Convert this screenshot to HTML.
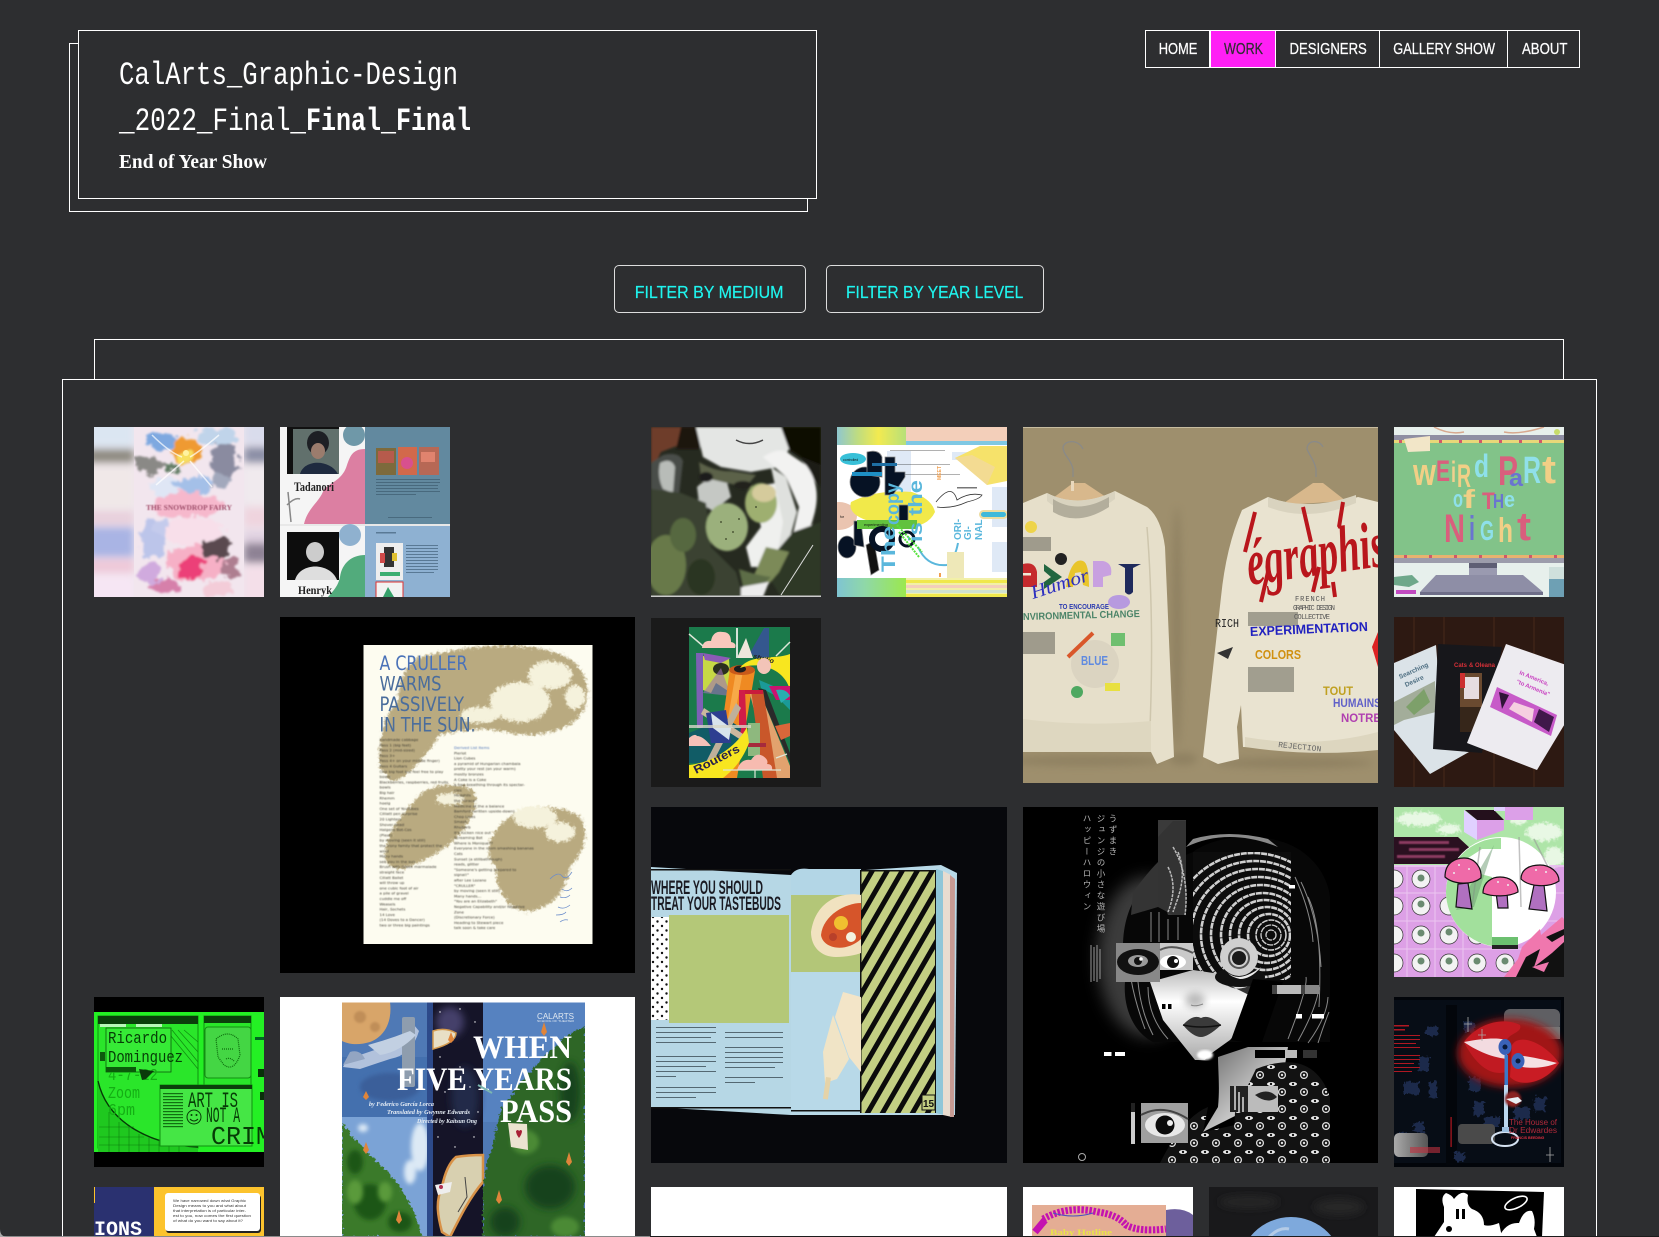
<!DOCTYPE html>
<html lang="en"><head><meta charset="utf-8"><title>CalArts_Graphic-Design_2022_Final_Final_Final</title>
<style>
html,body{margin:0;padding:0;background:#2d2e30;overflow:hidden;width:1659px;height:1237px}
body{font-family:"Liberation Sans",sans-serif}
#page{position:absolute;left:0;top:0;width:1659px;height:1237px;overflow:hidden}
.box{position:absolute;box-sizing:border-box;border:1px solid #fff}
.t{position:absolute;overflow:hidden;display:block}
.t>svg{display:block;width:100%;height:100%}
#ov{position:absolute;left:0;top:0;width:1659px;height:1237px;pointer-events:none}
.cell{position:absolute;top:30px;height:38px;box-sizing:border-box;border:1px solid #fff;margin-left:-1px}
</style></head><body><div id="page">
<svg width="0" height="0" style="position:absolute"><defs>
<filter id="b05"><feGaussianBlur stdDeviation=".5"/></filter>
<filter id="b1"><feGaussianBlur stdDeviation="1"/></filter>
<filter id="b2"><feGaussianBlur stdDeviation="2"/></filter>
<filter id="b4" x="-30%" y="-30%" width="160%" height="160%"><feGaussianBlur stdDeviation="4"/></filter>
<filter id="b8" x="-50%" y="-50%" width="200%" height="200%"><feGaussianBlur stdDeviation="8"/></filter>
<filter id="r1" x="-10%" y="-10%" width="120%" height="120%"><feTurbulence type="fractalNoise" baseFrequency=".11" numOctaves="3" seed="3" result="n"/><feDisplacementMap in="SourceGraphic" in2="n" scale="16" xChannelSelector="R" yChannelSelector="G" result="d"/><feGaussianBlur in="d" stdDeviation="1.1"/></filter>
<filter id="r2" x="-10%" y="-10%" width="120%" height="120%"><feTurbulence type="fractalNoise" baseFrequency=".3" numOctaves="2" seed="7" result="n"/><feDisplacementMap in="SourceGraphic" in2="n" scale="7" xChannelSelector="R" yChannelSelector="G"/></filter>
<pattern id="eyes" width="22" height="17" patternUnits="userSpaceOnUse"><ellipse cx="6" cy="5" rx="4" ry="2" fill="#eee"/><circle cx="6" cy="5" r="1.2" fill="#111"/><circle cx="17" cy="13" r="3.4" fill="none" stroke="#ddd" stroke-width="1.3"/><circle cx="17" cy="13" r="1.2" fill="#ddd"/></pattern>
<pattern id="stripes" width="13" height="13" patternUnits="userSpaceOnUse" patternTransform="rotate(30)"><rect width="13" height="13" fill="#c3cf83"/><rect width="5" height="13" fill="#0b0b0b"/></pattern>
<pattern id="dots" width="9" height="9" patternUnits="userSpaceOnUse"><rect width="9" height="9" fill="#fff"/><circle cx="2" cy="2" r="1.2" fill="#111"/><circle cx="6.5" cy="6.5" r="1.2" fill="#111"/></pattern>
<linearGradient id="gface" x1="0" y1="0" x2="0" y2="1"><stop offset="0" stop-color="#bbb"/><stop offset=".35" stop-color="#fff"/><stop offset="1" stop-color="#aaa"/></linearGradient>
<linearGradient id="gneck" x1="0" y1="0" x2="1" y2="1"><stop offset="0" stop-color="#666"/><stop offset=".6" stop-color="#ccc"/><stop offset="1" stop-color="#444"/></linearGradient>
<linearGradient id="gs1" x1="0" y1="0" x2="1" y2="0"><stop offset="0" stop-color="#8fc7cf"/><stop offset=".3" stop-color="#bfdc80"/><stop offset=".6" stop-color="#f2ea50"/><stop offset="1" stop-color="#b7e07a"/></linearGradient>
<linearGradient id="gs2" x1="0" y1="0" x2="1" y2="0"><stop offset="0" stop-color="#7fc4d2"/><stop offset=".4" stop-color="#8fd8a8"/><stop offset="1" stop-color="#9be84e"/></linearGradient>
<linearGradient id="gg" x1="0" y1="0" x2="1" y2="0"><stop offset="0" stop-color="#555"/><stop offset="1" stop-color="#aaa"/></linearGradient>
</defs></svg>

<header>
<div class="box" style="left:69px;top:43px;width:739px;height:169px"></div>
<div class="box" style="left:78px;top:30px;width:739px;height:169px;background:#2d2e30"></div>
</header>
<nav>
<div class="cell" style="left:1146px;width:65px"></div>
<div class="cell" style="left:1211px;width:66px;background:#ff1ff5"></div>
<div class="cell" style="left:1276px;width:105px"></div>
<div class="cell" style="left:1380px;width:129px"></div>
<div class="cell" style="left:1508px;width:73px"></div>
</nav>
<div class="box" style="left:614px;top:265px;width:192px;height:48px;border-radius:5px;border-color:#ddd"></div>
<div class="box" style="left:826px;top:265px;width:218px;height:48px;border-radius:5px;border-color:#ddd"></div>
<div class="box" style="left:94px;top:339px;width:1470px;height:40px;border-bottom:0"></div>
<div class="box" style="left:62px;top:379px;width:1535px;height:858px;background:#2d2e30;border-bottom:0"></div>

<!-- 1 snowdrop -->
<div class="t" style="left:94px;top:427px;width:170px;height:170px"><svg viewBox="0 0 170 170">
<rect width="170" height="170" fill="#efe6ee"/>
<g filter="url(#b4)"><rect x="-6" y="-6" width="46" height="26" fill="#dbe6f2"/><rect x="-6" y="22" width="46" height="14" fill="#8d8a80"/><rect x="-6" y="38" width="46" height="44" fill="#f0e8e8"/><rect x="-6" y="84" width="46" height="14" fill="#e8d0dc"/><rect x="-6" y="100" width="46" height="30" fill="#a9b4e4"/><rect x="-6" y="132" width="46" height="14" fill="#eec8d8"/><rect x="-6" y="148" width="46" height="30" fill="#f6e6f4"/>
<rect x="150" y="-6" width="26" height="24" fill="#d9dcec"/><rect x="150" y="20" width="26" height="16" fill="#8b8fa6"/><rect x="150" y="38" width="26" height="40" fill="#f0eaee"/><rect x="150" y="80" width="26" height="20" fill="#efd4de"/><rect x="150" y="104" width="26" height="12" fill="#dfd0e0"/><rect x="150" y="116" width="26" height="20" fill="#8e8294"/><rect x="150" y="138" width="26" height="40" fill="#f4dfe9"/></g>
<rect x="40" y="0" width="110" height="170" fill="#f2e6ee"/>
<svg x="40" y="0" width="110" height="170" viewBox="40 0 110 170"><g filter="url(#r1)">
<ellipse cx="66" cy="12" rx="16" ry="10" fill="#7ea8e0"/><ellipse cx="122" cy="10" rx="20" ry="8" fill="#c0d4ea"/>
<ellipse cx="92" cy="24" rx="14" ry="14" fill="#ef9a30"/><ellipse cx="92" cy="30" rx="8" ry="7" fill="#f7e060"/>
<ellipse cx="56" cy="38" rx="15" ry="8" fill="#8a8986"/><ellipse cx="130" cy="32" rx="14" ry="17" fill="#8a8ba0"/><ellipse cx="78" cy="42" rx="9" ry="4" fill="#5f7a62"/>
<ellipse cx="72" cy="60" rx="16" ry="10" fill="#dfe6f5"/><ellipse cx="100" cy="58" rx="20" ry="8" fill="#a4c0e8"/><ellipse cx="128" cy="54" rx="9" ry="8" fill="#a2a8bc"/>
<ellipse cx="92" cy="78" rx="36" ry="13" fill="#f6b8cc"/><ellipse cx="58" cy="112" rx="12" ry="20" fill="#bcc5ea"/><ellipse cx="70" cy="100" rx="10" ry="8" fill="#c4cbec"/>
<ellipse cx="100" cy="105" rx="30" ry="14" fill="#f8dfea"/><ellipse cx="102" cy="136" rx="30" ry="18" fill="#f6b0c6"/><ellipse cx="98" cy="140" rx="12" ry="12" fill="#ec3f78"/>
<ellipse cx="122" cy="122" rx="15" ry="11" fill="#5a4a50"/><ellipse cx="136" cy="142" rx="10" ry="8" fill="#ae7e90"/><ellipse cx="56" cy="146" rx="12" ry="10" fill="#d0aade"/><ellipse cx="72" cy="160" rx="16" ry="8" fill="#d680aa"/><ellipse cx="125" cy="162" rx="16" ry="8" fill="#f3ccd8"/></g>
<path d="M58 8 Q75 25 88 30M125 8Q105 25 96 30M62 58L90 34M118 60L96 34" stroke="#fff" stroke-width="1.5" fill="none" opacity=".7"/>
<circle cx="92" cy="26" r="3" fill="#fff3a0"/></svg>
<text x="52" y="83" font-size="7" font-weight="700" fill="#a0506c" textLength="86" lengthAdjust="spacingAndGlyphs" filter="url(#b05)" font-family="Liberation Serif">THE SNOWDROP FAIRY</text>
</svg></div>

<!-- 2 tadanori -->
<div class="t" style="left:280px;top:427px;width:170px;height:170px"><svg viewBox="0 0 170 170" font-family="Liberation Serif,serif">
<rect width="85" height="170" fill="#f5f5f5"/><rect x="85" width="85" height="97" fill="#62899f"/><rect x="85" y="99" width="85" height="71" fill="#8eb1d2"/><rect y="97" width="170" height="2" fill="#e8e8e8"/>
<circle cx="74" cy="8" r="11" fill="#6f98a8"/>
<path d="M85 22C72 22 70 30 67 38C63 52 52 55 44 62C40 75 28 80 24 97L85 97Z" fill="#dc7fa2"/>
<rect x="7" y="0" width="52" height="47" fill="#111"/><rect x="13" y="2" width="46" height="45" fill="#61706c"/><ellipse cx="38" cy="16" rx="11" ry="12" fill="#1d1f24"/><ellipse cx="38" cy="24" rx="7" ry="8" fill="#9b7c6d"/><path d="M20 47C24 32 50 32 58 47Z" fill="#1e2a3f"/>
<text x="14" y="64" font-size="12.5" font-weight="700" fill="#222" textLength="40" lengthAdjust="spacingAndGlyphs">Tadanori</text>
<path d="M8 65L11 95M7 78Q15 70 20 72" stroke="#888" stroke-width="1.5" fill="none"/>
<rect x="96" y="21" width="20" height="27" fill="#7d6a3c"/><rect x="98" y="24" width="16" height="12" fill="#b65b4c"/><rect x="118" y="20" width="19" height="28" fill="#d2694b"/><circle cx="127" cy="36" r="6" fill="#d8508e"/><rect x="139" y="20" width="20" height="28" fill="#b76855"/><rect x="141" y="25" width="14" height="10" fill="#e0836e"/>
<g fill="#3e5c70" opacity=".7"><rect x="96" y="52" width="64" height="1"/><rect x="96" y="55" width="64" height="1"/><rect x="96" y="58" width="62" height="1"/><rect x="96" y="61" width="62" height="1"/><rect x="96" y="64" width="64" height="1"/><rect x="96" y="67" width="40" height="1"/><rect x="108" y="90" width="44" height="1"/></g>
<circle cx="70" cy="108" r="11" fill="#8fb1cf"/><path d="M85 128C72 128 62 136 60 150C58 160 52 165 48 170L85 170Z" fill="#52ab7c"/>
<rect x="7" y="105" width="52" height="48" fill="#0d0d0d"/><ellipse cx="35" cy="125" rx="9" ry="10" fill="#ccc"/><path d="M15 153C20 135 50 135 57 153Z" fill="#dedede"/>
<text x="18" y="167" font-size="12" font-weight="700" fill="#222" textLength="34" lengthAdjust="spacingAndGlyphs">Henryk</text>
<rect x="96" y="116" width="27" height="37" fill="#eee"/><rect x="104" y="120" width="10" height="20" fill="#333"/><rect x="100" y="126" width="5" height="10" fill="#d04a4a"/><rect x="112" y="126" width="5" height="8" fill="#e0c030"/><rect x="100" y="145" width="20" height="4" fill="#3cae70"/>
<rect x="96" y="155" width="27" height="20" fill="#f2f2f2" stroke="#d33" stroke-width="1"/><path d="M103 170L108 160L114 170Z" fill="#36a06a"/>
<g fill="#44627c" opacity=".7"><rect x="126" y="118" width="32" height="1"/><rect x="126" y="121" width="32" height="1"/><rect x="126" y="124" width="32" height="1"/><rect x="126" y="127" width="32" height="1"/><rect x="126" y="130" width="32" height="1"/><rect x="126" y="133" width="32" height="1"/><rect x="126" y="136" width="32" height="1"/><rect x="126" y="139" width="32" height="1"/><rect x="126" y="142" width="32" height="1"/><rect x="126" y="145" width="28" height="1"/><rect x="96" y="105" width="20" height="1.5"/></g>
</svg></div>

<!-- 3 cruller -->
<div class="t" style="left:280px;top:617px;width:355px;height:356px"><svg viewBox="0 0 355 356" font-family="DejaVu Sans,sans-serif">
<rect width="355" height="356" fill="#000"/><rect x="83.5" y="28" width="229" height="299" fill="#fdfcf0"/>
<svg x="83.5" y="28" width="229" height="299" viewBox="83.5 28 229 299"><g filter="url(#r2)"><g filter="url(#b1)" fill="#b9aa80">
<path d="M140 40C175 32 225 22 270 34C305 42 312 70 305 90C295 115 255 122 225 115C205 110 180 113 160 118C148 135 130 160 112 165L100 150C98 130 102 100 118 85C118 65 125 48 140 40Z"/>
<path d="M138 180C150 165 185 165 195 175C200 195 180 225 150 240C130 250 110 260 105 240C105 215 125 195 138 180Z"/>
<path d="M215 215C225 195 270 180 300 200C312 220 300 240 290 250C285 275 275 290 245 295C225 290 215 270 216 250C205 240 208 225 215 215Z"/>
</g>
<g filter="url(#b1)" fill="#f5f2dc"><ellipse cx="270" cy="58" rx="22" ry="14"/><ellipse cx="240" cy="85" rx="30" ry="20"/><ellipse cx="200" cy="98" rx="20" ry="8"/><ellipse cx="295" cy="80" rx="10" ry="12"/><ellipse cx="255" cy="200" rx="22" ry="11"/><ellipse cx="280" cy="215" rx="15" ry="10"/><ellipse cx="170" cy="182" rx="14" ry="6"/></g></g></svg>
<g font-size="19.5" fill="#4a72b8"><text x="99.5" y="53" textLength="88" lengthAdjust="spacingAndGlyphs">A CRULLER</text><text x="99.5" y="73.5" textLength="62" lengthAdjust="spacingAndGlyphs" fill="#4a6d9c">WARMS</text><text x="99.5" y="94" textLength="84.5" lengthAdjust="spacingAndGlyphs" fill="#4a6d9c">PASSIVELY</text><text x="99.5" y="114.5" textLength="96" lengthAdjust="spacingAndGlyphs" fill="#4a6d9c">IN THE SUN.</text></g>
<g font-size="3.9" fill="#3d3a30" filter="url(#b05)">
<text x="99.5" y="124">handmade cabbage</text><text x="99.5" y="129.3">Pass 1 (big feet)</text><text x="99.5" y="134.6">Pass 2 (mid-sized)</text><text x="99.5" y="139.9">Pass 3+</text><text x="99.5" y="145.2">Pass 4+ on your middle finger)</text><text x="99.5" y="150.5">Pass 4 Guitars</text><text x="99.5" y="155.8">One big foot but feel free to play</text><text x="99.5" y="161.1">bowls</text><text x="99.5" y="166.4">Blackberries, raspberries, red fruits</text><text x="99.5" y="171.7">bowls</text><text x="99.5" y="177">Big hair</text><text x="99.5" y="182.3">Rhemm</text><text x="99.5" y="187.6">hoelg</text><text x="99.5" y="192.9">One set of YouTubes</text><text x="99.5" y="198.2">Cilliatt pen surprise</text><text x="99.5" y="203.5">20 Lighters</text><text x="99.5" y="208.8">Shover head</text><text x="99.5" y="214.1">Halgens Bot-Cos</text><text x="99.5" y="219.4">(Pleat)</text><text x="99.5" y="224.7">by moving (seen it still)</text><text x="99.5" y="230">the Irony family that protect the</text><text x="99.5" y="235.3">wind</text><text x="99.5" y="240.6">Many hands</text><text x="99.5" y="245.9">see you in the sun</text><text x="99.5" y="251.2">Brush with Greek marmalade</text><text x="99.5" y="256.5">straight face</text><text x="99.5" y="261.8">Cillatt Ballet</text><text x="99.5" y="267.1">will throw up</text><text x="99.5" y="272.4">one cubic foot of air</text><text x="99.5" y="277.7">a pile of gravel</text><text x="99.5" y="283">cuddle me off</text><text x="99.5" y="288.3">Weasels</text><text x="99.5" y="293.6">Hair, Sochets</text><text x="99.5" y="298.9">14 Love</text><text x="99.5" y="304.2">(14 Doves to a Dancer)</text><text x="99.5" y="309.5">two or three big paintings</text>
<text x="174" y="132" fill="#4a72b8">Derived List Items</text><text x="174" y="137.3">Pierlot</text><text x="174" y="142.6">Lion Cubes</text><text x="174" y="147.9">a pyramid of Hungarian chambala</text><text x="174" y="153.2">pretty your rest (on your warm)</text><text x="174" y="158.5">mostly bronzes</text><text x="174" y="163.8">A Coke is a Coke</text><text x="174" y="169.1">a tree breathing through its spectar-</text><text x="174" y="174.4">cles</text><text x="174" y="179.7">Hedghils</text><text x="174" y="185">the "Grace"</text><text x="174" y="190.3">Medicine at the a balance</text><text x="174" y="195.6">Bamford (written upside-down)</text><text x="174" y="200.9">Chop Lines</text><text x="174" y="206.2">Smash</text><text x="174" y="211.5">Rhubarb</text><text x="174" y="216.8">It's fucken nice out</text><text x="174" y="222.1">Screaming Bot</text><text x="174" y="227.4">Where is Monique??</text><text x="174" y="232.7">Everyone in the room smashing bananas</text><text x="174" y="238">Cats</text><text x="174" y="243.3">Sunset (a stillbathrough)</text><text x="174" y="248.6">reads, glitter</text><text x="174" y="253.9">"Someone's getting prepared to</text><text x="174" y="259.2">signal!"</text><text x="174" y="264.5">after Lee Lozano</text><text x="174" y="269.8">"CRULLER"</text><text x="174" y="275.1">by moving (seen it still)</text><text x="174" y="280.4">Many hands...</text><text x="174" y="285.7">"You are an Elizabeth"</text><text x="174" y="291">Negative Capability and/or Negative</text><text x="174" y="296.3">Zone</text><text x="174" y="301.6">(Discretionary Force)</text><text x="174" y="306.9">Heading to Stewart piece</text><text x="174" y="312.2">talk soon &amp; take care</text></g>
<g stroke="#6a8ccb" stroke-width=".7" fill="none"><path d="M270 262q8-8 12-3t10-4M282 272q5 4 10-1M280 280q6 2 10-2M278 290q6 3 12-2M276 298q8 0 10-3M280 305q4-3 8-2"/></g>
</svg></div>

<!-- 4 face -->
<div class="t" style="left:651px;top:427px;width:170px;height:170px"><svg viewBox="0 0 170 170">
<rect width="170" height="170" fill="#262a20"/>
<g filter="url(#b1)">
<path d="M0 0H40L28 18L10 25L0 45Z" fill="#6e3e2a"/><path d="M30 0H60L48 22L25 22Z" fill="#1a1310"/><path d="M128 0H170V38L150 30L135 20Z" fill="#0c0705"/><path d="M150 30L170 38V60L160 50Z" fill="#1b1a16"/>
<path d="M0 36L12 28Q28 24 32 34L28 68L12 70L0 62Z" fill="#4a4d48"/><path d="M9 36Q20 30 24 40L22 66L12 62Q6 50 9 36Z" fill="#b8bcb8"/>
<path d="M45 0H130L138 22L128 40L100 45L70 40L52 30Z" fill="#e4e6e4"/><path d="M46 60Q58 48 76 55L80 70L62 84L48 76Z" fill="#c5c8c4"/>
<path d="M48 35Q65 45 80 44L105 48L95 60L76 56L50 50Z" fill="#5c6248"/><ellipse cx="92" cy="58" rx="9" ry="4" fill="#20201b"/><ellipse cx="55" cy="50" rx="7" ry="5" fill="#1e1e1a"/>
<path d="M100 60L125 56L140 80L132 120L125 140L100 140L95 120L110 100Z" fill="#eff0ee"/>
<path d="M112 30Q130 18 140 28L155 38Q172 60 162 92L152 125L140 165L132 165L138 125L148 80L135 50Z" fill="#f2f2f1"/>
<path d="M120 40L135 50L146 85L135 125L125 135L132 95Z" fill="#dfe1de"/>
<path d="M0 62L30 66L55 76L60 120L85 145L92 170H0Z" fill="#3b4231"/>
<ellipse cx="76" cy="100" rx="21" ry="24" fill="#9bb07c"/><ellipse cx="110" cy="76" rx="16" ry="20" fill="#9eaf70"/><ellipse cx="113" cy="66" rx="12" ry="9" fill="#d5cb9c"/>
<ellipse cx="15" cy="138" rx="20" ry="30" fill="#68794a"/><ellipse cx="32" cy="108" rx="13" ry="17" fill="#56683f"/><ellipse cx="50" cy="150" rx="14" ry="18" fill="#2a3522"/>
<path d="M112 140L142 105L170 95V170H130Z" fill="#2e3826"/><path d="M115 120L138 125L128 145L115 160L100 155Z" fill="#7c8a58"/><path d="M88 142Q105 148 120 150L105 165L92 160Z" fill="#5d6d46"/><path d="M90 160L118 155L112 170H90Z" fill="#ececec"/>
</g>
<path d="M85 13Q98 20 112 13" stroke="#444" stroke-width="1.5" fill="none"/><path d="M130 168L162 118" stroke="#ddd" stroke-width="1" fill="none"/><g fill="#4e5a38"><circle cx="70" cy="95" r="1"/><circle cx="82" cy="105" r="1"/><circle cx="75" cy="112" r="1"/><circle cx="88" cy="92" r="1"/><circle cx="105" cy="80" r="1"/></g>
<rect y="168.5" width="170" height="1.5" fill="#ccc"/></svg></div>

<!-- 5 original -->
<div class="t" style="left:837px;top:427px;width:170px;height:170px"><svg viewBox="0 0 170 170" font-family="Liberation Sans,sans-serif">
<rect width="170" height="170" fill="#fff"/>
<rect width="69" height="18" fill="url(#gs1)"/><rect x="69" width="101" height="14" fill="#f3cfba"/><rect x="69" y="14" width="101" height="4" fill="#7fc8e4"/>
<rect y="151" width="69" height="19" fill="url(#gs2)"/><rect x="69" y="151" width="101" height="19" fill="#f2f0a8"/><rect x="69" y="153" width="101" height="3" fill="#f0e84c"/><rect x="69" y="158" width="101" height="3" fill="#f3cfba"/><rect x="69" y="163" width="101" height="3" fill="#cfe1d0"/><rect x="69" y="167" width="101" height="3" fill="#f0e84c"/>
<g fill="#dfe9f6"><rect x="50" y="24" width="24" height="50"/><rect x="155" y="60" width="15" height="40"/><rect x="155" y="115" width="15" height="30"/><rect x="115" y="25" width="30" height="8"/></g>
<path d="M118 31L143 19H170V54L150 58Z" fill="#f6e26a"/><path d="M118 31L150 58L158 40L135 28Z" fill="#f2d9a4" opacity=".7"/>
<g fill="#222" opacity=".35"><rect x="53" y="23" width="55" height="1"/><rect x="53" y="37" width="60" height="1"/><rect x="53" y="47" width="70" height="1"/></g>
<text x="101" y="50" font-size="5" fill="#f0a050" transform="rotate(-90 104 50)" font-weight="700">MEET</text>
<ellipse cx="16" cy="32" rx="13" ry="6" fill="#38c0d8"/><text x="6" y="34" font-size="3.5" fill="#111">controlled</text>
<ellipse cx="2" cy="89" rx="18" ry="14" fill="#eac4b0"/><text x="3" y="91" font-size="3.5" fill="#111">for</text>
<path d="M14 75Q40 62 75 65Q95 72 98 85Q90 102 62 100L35 95Q10 88 14 75Z" fill="#f1e94a"/>
<g fill="#061224" stroke="#8a8a8a" stroke-width=".8"><ellipse cx="28" cy="55" rx="15" ry="15"/><path d="M30 25Q42 22 45 30L45 50L30 48Z"/><path d="M48 30H58V45H68V50L56 68H48Z"/><rect x="62" y="78" width="9" height="20"/><ellipse cx="10" cy="120" rx="9" ry="11"/><path d="M17 94L24 94L27 120L17 118Z"/><path d="M29 118L37 114L42 143L34 148Z" fill="#111"/></g>
<rect x="15" y="45" width="30" height="4" fill="#1e8fc4"/><rect x="35" y="36" width="25" height="3" fill="#1e6fa4"/>
<rect x="20" y="93" width="60" height="9" fill="#62c23e"/><text x="27" y="99" font-size="3.8" fill="#111">experimenting</text>
<circle cx="45" cy="112" r="10" fill="none" stroke="#061224" stroke-width="6"/><circle cx="70" cy="112" r="7" fill="none" stroke="#061224" stroke-width="3"/>
<g font-weight="700" fill="#5ab7dc" font-size="19"><text transform="translate(58 145) rotate(-90)" textLength="46" lengthAdjust="spacingAndGlyphs">The</text><text transform="translate(62 98) rotate(-90)" textLength="42" lengthAdjust="spacingAndGlyphs">copy</text><text transform="translate(85 115) rotate(-90)" textLength="62" lengthAdjust="spacingAndGlyphs">is the</text></g>
<g font-weight="700" fill="#5ab7dc" font-size="10"><text transform="translate(124 113) rotate(-90)">ORI-</text><text transform="translate(134 113) rotate(-90)">GI-</text><text transform="translate(145 113) rotate(-90)">NAL</text></g>
<path d="M81 120Q90 140 110 138Q118 132 121 116" fill="none" stroke="#5ab7dc" stroke-width="2"/><path d="M60 98L85 125M62 105L82 130" stroke="#55e23c" stroke-width="2" stroke-dasharray="2 1"/>
<path d="M99 75Q115 55 120 73Q132 65 145 68Q143 72 130 75Q115 82 100 80" fill="none" stroke="#333" stroke-width=".8"/><rect x="120" y="60" width="20" height="1.5" fill="#777"/>
<rect x="143" y="84" width="27" height="7" rx="3.5" fill="#3fb9da" stroke="#eddca0" stroke-width="2"/>
<g fill="#eee8b8"><rect x="110" y="125" width="17" height="26"/></g><rect x="102" y="146" width="2" height="4" fill="#f0a050"/>
</svg></div>

<!-- 6 routers -->
<div class="t" style="left:651px;top:618px;width:170px;height:169px"><svg viewBox="0 0 170 169" font-family="Liberation Sans,sans-serif">
<rect width="170" height="169" fill="#1a1a1a"/><rect x="38" y="9" width="101" height="151" fill="#1b7a4b"/>
<path d="M51 30Q52 22 60 23Q62 12 72 14Q80 14 80 24Q86 25 84 30Z" fill="#f9c8bd"/>
<path d="M99 35L113 10L118 10L118 50Z" fill="#34578e"/><path d="M95 20L102 40L86 40Z" fill="#efe6dc"/><path d="M85 10H87V40H85Z" fill="#d6e2d8"/><path d="M38 16L52 28M139 24L125 38" stroke="#dfe6d8" stroke-width="1.5"/>
<path d="M45 35L52 35L52 110L46 110Z" fill="#7d60b5"/><path d="M52 38L78 40L80 75L65 65L60 75L52 72Z" fill="#c7d845"/><path d="M52 35L80 40L70 45L54 42Z" fill="#8b5bb6"/><ellipse cx="70" cy="51" rx="8" ry="6" fill="#2b2f1e"/><path d="M52 75L70 50L80 78Z" fill="#9c6fb8" opacity=".6"/>
<path d="M79 50L104 53L86 160L64 160Z" fill="#ef8a22"/><path d="M85 53L92 53L72 160L67 160Z" fill="#f7a948"/><ellipse cx="91" cy="52" rx="13" ry="5" fill="#c95a1a"/><ellipse cx="89" cy="51" rx="6" ry="3.5" fill="#1e1e1e"/>
<path d="M89 50C100 35 125 42 139 36L139 72C133 50 108 43 89 50Z" fill="#f8e61f"/><text transform="translate(102 40) rotate(15)" font-size="7" font-weight="700" font-style="italic" fill="#222">studio</text>
<ellipse cx="113" cy="48" rx="7" ry="8" fill="#f3c4b8"/>
<path d="M108 62L139 75L139 92L125 78L110 70Z" fill="#1a9a98"/><path d="M118 68H139V82L125 82Z" fill="#cb1470"/><path d="M125 72Q135 70 139 78L130 85Z" fill="#2aaeb0"/>
<path d="M98 72L108 72L139 148L139 160L120 160Z" fill="#e2a26e"/><path d="M107 70L139 145L139 135L115 72Z" fill="#2a2a2a"/><path d="M100 72H112L126 160H112Z" fill="#c9572a"/><path d="M124 108L139 105V118L130 122Z" fill="#d9673a"/>
<path d="M88 72H112V76H88Z" fill="#c91b3c"/><path d="M88 72H94L96 120H88Z" fill="#d01c48"/><rect x="97" y="105" width="12" height="33" fill="#8eb87e"/><rect x="97" y="125" width="18" height="4" fill="#a62a3c"/>
<path d="M38 115L75 100L90 110L85 145H38Z" fill="#115c66"/><path d="M53 90L95 118L90 122L50 96Z" fill="#cbb89e"/><path d="M85 85L52 150L58 152L90 90Z" fill="#bfb09a"/><path d="M55 95L75 92L80 125L60 125Z" fill="#2d3e90"/><path d="M60 95L80 110L78 122L62 110Z" fill="#d8e4ec"/>
<path d="M38 120Q44 115 46 118Q52 118 60 128H38Z" fill="#f5c1b8"/><path d="M38 107H100V110H38Z" fill="#d8d8c8" opacity=".8"/>
<path d="M38 147C60 145 85 130 96 109L98 125C92 140 85 150 72 160H38Z" fill="#f8e61f"/><text transform="translate(45 156) rotate(-27)" font-size="11.5" font-weight="700" fill="#27214a" textLength="50" lengthAdjust="spacingAndGlyphs">Routers</text>
<path d="M86 152Q90 140 100 142Q105 134 112 138Q118 142 116 146Q122 146 121 152Z" fill="#f7bbb0"/><path d="M104 152V160M72 152H130M125 140L136 136" stroke="#dfe6d8" stroke-width="1.2"/>
</svg></div>

<!-- 7 sweatshirts -->
<div class="t" style="left:1023px;top:427px;width:355px;height:356px"><svg viewBox="0 0 355 356" font-family="Liberation Sans,sans-serif">
<rect width="355" height="356" fill="#9e8f6d"/><rect width="355" height="1" fill="#c7bc9f"/>
<g opacity=".45" fill="#7d6f52" filter="url(#b4)"><ellipse cx="160" cy="332" rx="14" ry="6"/><ellipse cx="60" cy="334" rx="80" ry="5"/><ellipse cx="270" cy="336" rx="80" ry="5"/><ellipse cx="154" cy="200" rx="5" ry="120"/></g>
<g fill="none" stroke="#8a8a88" stroke-width="1.3"><path d="M50 50V42C48 32 40 28 40 20C42 13 55 12 60 22"/><path d="M293 50V42C291 32 286 28 284 22C284 13 296 12 300 20"/></g>
<path d="M18 80L50 56L62 56L92 76Z" fill="#d8b88c"/><path d="M258 78L290 56L300 56L323 74Z" fill="#d8b88c"/><rect x="48" y="54" width="3" height="10" fill="#e9d8bc"/>
<path d="M0 76L24 66Q55 82 92 64L124 80Q138 90 142 120L151 330L134 337L128 325L0 325Z" fill="#e6dfca"/><path d="M24 66Q55 82 92 64L92 72Q55 100 24 74Z" fill="#d9d3bf"/><path d="M30 72Q55 88 86 70L86 80Q55 100 30 85Z" fill="#b3ae9c"/>
<path d="M124 100Q132 200 126 325" stroke="#cec6ad" stroke-width="1.5" fill="none"/><path d="M0 292Q60 300 128 294V325H0Z" fill="#ded7c0"/>
<path d="M355 323L355 75L335 70Q285 85 245 70L219 83Q203 120 198 170L180 330L195 337L216 332L214 300L218 278L220 320Z" fill="#e9e3d0"/><path d="M245 70Q285 85 333 68L333 76Q285 96 245 80Z" fill="#d9d3bf"/><path d="M222 310Q290 322 355 305V323Q290 330 222 320Z" fill="#ddd6bf"/>
<g font-weight="700">
<path d="M0 137Q12 134 14 145V160H0Z" fill="#c52a2c"/><rect x="0" y="146" width="8" height="2.5" fill="#f1ead6"/><path d="M21 137L39 150L21 162V155L28 150L21 144Z" fill="#226640"/><path d="M43 160Q48 130 60 134Q66 136 66 160L60 158L58 145L52 146L50 160Z" fill="#e9c52a"/><path d="M70 134H80Q90 136 88 148L80 150L80 160L70 160Z" fill="#c8a0e0"/><path d="M95 137H118L110 141L110 165Q106 170 102 165L102 141Z" fill="#1f2a5c"/><circle cx="38" cy="132" r="6" fill="#222"/><ellipse cx="96" cy="175" rx="11" ry="7" fill="#b79adf"/>
<text x="36" y="182" font-size="7.5" fill="#2b3ab0" textLength="50" lengthAdjust="spacingAndGlyphs">TO ENCOURAGE</text>
<text x="0" y="193" font-size="10" fill="#4b8468" textLength="117" lengthAdjust="spacingAndGlyphs" transform="rotate(-1.5 0 193)">NVIRONMENTAL CHANGE</text>
<text x="10" y="172" font-size="19" fill="#2d2fc0" font-family="Liberation Serif" font-style="italic" font-weight="400" transform="rotate(-18 10 172)" textLength="60" lengthAdjust="spacingAndGlyphs">Humor</text>
</g>
<circle cx="72" cy="237" r="24" fill="#d6cfbe" opacity=".7"/><text x="58" y="238" font-size="13" font-weight="700" fill="#5f8ae0" textLength="27" lengthAdjust="spacingAndGlyphs">BLUE</text>
<path d="M45 230L70 206" stroke="#d9572a" stroke-width="4"/><rect x="88" y="206" width="14" height="13" fill="#6fbf6f"/><circle cx="54" cy="265" r="6" fill="#4ea860"/><rect x="82" y="256" width="15" height="8" fill="#e8e040"/>
<g fill="#4a4a40"><rect x="0" y="110" width="28" height="14" opacity=".45"/><rect x="0" y="205" width="32" height="22" opacity=".45"/><rect x="225" y="185" width="50" height="14" opacity=".45"/><rect x="225" y="240" width="46" height="25" opacity=".45"/></g>
<circle cx="8" cy="100" r="6" fill="#eed44a"/>
<text x="224" y="158" font-size="66" fill="#b9161c" font-family="Liberation Serif" font-style="italic" font-weight="700" textLength="140" lengthAdjust="spacingAndGlyphs" transform="rotate(-8 224 140)">égraphis</text>
<g stroke="#b9161c" stroke-width="4" fill="none"><path d="M232 85L222 125M280 80L288 115M320 75L316 100M245 145L238 175M296 140L290 165M310 155L312 170"/></g>
<g fill="#555" font-family="Liberation Mono" font-size="7"><text x="272" y="174" textLength="30">FRENCH</text><text x="270" y="183" textLength="42">GRAPHIC DESIGN</text><text x="271" y="192" textLength="36">COLLECTIVE</text></g>
<text x="227" y="209" font-size="13" font-weight="700" fill="#2020bf" textLength="118" lengthAdjust="spacingAndGlyphs" transform="rotate(-2.5 227 206)">EXPERIMENTATION</text>
<text x="192" y="200" font-size="12" fill="#222" font-family="Liberation Mono" textLength="24" lengthAdjust="spacingAndGlyphs">RICH</text><path d="M194 226L210 220L205 232Z" fill="#333"/>
<g font-size="13" font-weight="700"><text x="232" y="232" fill="#d09010" textLength="46" lengthAdjust="spacingAndGlyphs">COLORS</text></g>
<g font-size="12" font-weight="700"><text x="300" y="268" fill="#c0a020" textLength="30" lengthAdjust="spacingAndGlyphs">TOUT</text><text x="310" y="280" fill="#6060c8" textLength="48" lengthAdjust="spacingAndGlyphs">HUMAINS</text><text x="318" y="295" fill="#b040b0" textLength="40" lengthAdjust="spacingAndGlyphs">NOTRE</text></g>
<text x="255" y="320" font-size="8" fill="#666" font-family="Liberation Mono" transform="rotate(6 255 320)">REJECTION</text><path d="M349 220L355 205V240Z" fill="#d22"/>
</svg></div>

<!-- 8 weird part -->
<div class="t" style="left:1394px;top:427px;width:170px;height:170px"><svg viewBox="0 0 170 170" font-family="Liberation Sans,sans-serif">
<rect width="170" height="170" fill="#e7f0ec"/><rect y="8" width="170" height="7" fill="#8f8fa3"/><rect y="15" width="170" height="113" fill="#82c389"/>
<rect y="13" width="170" height="3" fill="#e8d879"/><rect y="128" width="170" height="3" fill="#e8b26f"/><rect y="131" width="170" height="5" fill="#9c9cab"/>
<g fill="#d0576a"><rect x="5" y="13" width="3" height="3"/><rect x="25" y="13" width="3" height="3"/><rect x="45" y="13" width="3" height="3"/><rect x="65" y="13" width="3" height="3"/><rect x="85" y="13" width="3" height="3"/><rect x="105" y="13" width="3" height="3"/><rect x="125" y="13" width="3" height="3"/><rect x="145" y="13" width="3" height="3"/><rect x="10" y="128" width="3" height="3"/><rect x="35" y="128" width="3" height="3"/><rect x="60" y="128" width="3" height="3"/><rect x="85" y="128" width="3" height="3"/><rect x="110" y="128" width="3" height="3"/><rect x="135" y="128" width="3" height="3"/><rect x="160" y="128" width="3" height="3"/></g>
<path d="M10 12L36 9L36 24L14 25Z" fill="#f2e6c8"/><path d="M40 0Q55 8 70 5M110 5Q125 8 150 0" stroke="#d7a88e" stroke-width="1.5" fill="none"/><circle cx="163" cy="5" r="3" fill="#c7dc6a"/>
<g font-weight="700"><text x="19" y="58" font-size="38" fill="#f2cf86" textLength="23" lengthAdjust="spacingAndGlyphs">w</text><text x="42" y="54" font-size="30" fill="#d95f7d" textLength="14" lengthAdjust="spacingAndGlyphs">E</text><text x="57" y="55" font-size="30" fill="#f0d08e" textLength="5" lengthAdjust="spacingAndGlyphs">i</text><text x="63" y="60" font-size="32" fill="#f2cf86" textLength="14" lengthAdjust="spacingAndGlyphs">R</text><text x="80" y="50" font-size="32" fill="#8ee0ea" textLength="15" lengthAdjust="spacingAndGlyphs">d</text>
<text x="104" y="58" font-size="42" fill="#d95f7d" textLength="20" lengthAdjust="spacingAndGlyphs">P</text><text x="115" y="59" font-size="24" fill="#6a74d0" textLength="14" lengthAdjust="spacingAndGlyphs">a</text><text x="129" y="56" font-size="38" fill="#90e0ea" textLength="18" lengthAdjust="spacingAndGlyphs">R</text><text x="148" y="56" font-size="40" fill="#f2cf86" textLength="14" lengthAdjust="spacingAndGlyphs">t</text>
<text x="59" y="80" fill="#8ee0ea" font-size="24" textLength="10" lengthAdjust="spacingAndGlyphs">o</text><text x="69" y="81" fill="#f2cf86" font-size="26" textLength="12" lengthAdjust="spacingAndGlyphs">f</text><text x="88" y="82" fill="#d95f7d" font-size="24" textLength="13" lengthAdjust="spacingAndGlyphs">T</text><text x="99" y="81" fill="#6a74d0" font-size="20" textLength="11" lengthAdjust="spacingAndGlyphs">H</text><text x="110" y="80" fill="#8ee0ea" font-size="22" textLength="11" lengthAdjust="spacingAndGlyphs">e</text>
<text x="50" y="115" fill="#d95f7d" font-size="40" textLength="21" lengthAdjust="spacingAndGlyphs">N</text><text x="75" y="113" fill="#6a74d0" font-size="34" textLength="6" lengthAdjust="spacingAndGlyphs">i</text><text x="86" y="113" fill="#8ee0ea" font-size="28" textLength="14" lengthAdjust="spacingAndGlyphs">G</text><text x="104" y="115" fill="#f2cf86" font-size="34" textLength="15" lengthAdjust="spacingAndGlyphs">h</text><text x="123" y="113" fill="#d95f7d" font-size="40" textLength="14" lengthAdjust="spacingAndGlyphs">t</text></g>
<rect x="75" y="136" width="28" height="5" fill="#5e5e74"/><rect x="75" y="141" width="28" height="14" fill="#9a9ab0"/><path d="M42 148L129 148L149 165V168H26V165Z" fill="#8e8ea6"/><rect x="26" y="165" width="123" height="3" fill="#6e6e88"/>
<rect x="155" y="140" width="15" height="30" fill="#cfe0dc"/><rect x="155" y="152" width="15" height="18" fill="#6ea0b4"/><path d="M0 150L18 148L25 155L15 160L0 158Z" fill="#6ea88a"/><rect x="2" y="163" width="20" height="4" fill="#c14bc0"/>
</svg></div>

<!-- 9 books -->
<div class="t" style="left:1394px;top:617px;width:170px;height:170px"><svg viewBox="0 0 170 170" font-family="Liberation Sans,sans-serif">
<rect width="170" height="170" fill="#2d1912"/><g stroke="#3a2116" stroke-width="2"><path d="M50 0V170M100 0V170M140 0V170M20 0V170"/></g>
<path d="M0 46L42 28L50 132L75 135L36 157L0 113Z" fill="#dbe3e8"/>
<path d="M0 85L41 64L42 95L10 103L0 108Z" fill="#a3ad9a"/><path d="M12 90L30 72L36 85L20 98Z" fill="#7da06a"/>
<text transform="translate(6 62) rotate(-24)" font-size="6.5" font-weight="700" fill="#4c6d80">Searching</text><text transform="translate(12 70) rotate(-24)" font-size="6.5" font-weight="700" fill="#4c6d80">Desire</text>
<path d="M44 27L108 30L88 136L39 132Z" fill="#17171b"/>
<text x="60" y="50" font-size="6" font-weight="700" fill="#d83038">Cats</text><text x="75" y="50" font-size="6" font-weight="700" fill="#d83038">&amp; Oleana</text>
<rect x="66" y="56" width="22" height="59" fill="#6a4a30"/><rect x="70" y="60" width="15" height="22" fill="#e6dde0"/><rect x="66" y="90" width="22" height="25" fill="#36261a"/><rect x="66" y="56" width="5" height="15" fill="#cc3030"/>
<path d="M112 27L172 48L175 100L143 153L73 126Z" fill="#edebf0"/>
<path d="M103 70L163 98L157 119L96 90Z" fill="#c75ac8"/><path d="M120 85L140 92L138 105L115 92Z" fill="#f5cfe0"/><path d="M105 75L115 78L108 92Z" fill="#301438"/><path d="M145 92L160 100L155 115L140 105Z" fill="#40184a"/>
<text transform="translate(125 57) rotate(22)" font-size="5.8" font-weight="700" fill="#c83ec0">In America,</text><text transform="translate(122 66) rotate(22)" font-size="5.8" font-weight="700" fill="#c83ec0">"to Armenia"</text>
</svg></div>

<!-- 10 book spread -->
<div class="t" style="left:651px;top:807px;width:356px;height:356px"><svg viewBox="0 0 356 356" font-family="Liberation Sans,sans-serif">
<rect width="356" height="356" fill="#07080c"/>
<path d="M0 60L140 68L140 308L0 300Z" fill="#b6d7e5"/><path d="M140 68L290 58L306 66L304 308L140 308Z" fill="#b8d9e8"/>
<path d="M140 68Q145 60 158 62L210 62L210 88L140 88Z" fill="#b3d6e6"/>
<rect x="140" y="88" width="70" height="77" fill="#b3c678"/>
<rect x="18" y="108" width="120" height="108" fill="#b4c878"/><rect y="110" width="18" height="103" fill="url(#dots)"/>
<rect y="62" width="140" height="1.5" fill="#111"/><rect y="300" width="140" height="1.5" fill="#111"/><rect x="140" y="303" width="70" height="1.5" fill="#111"/>
<text x="0" y="87" font-size="19" font-weight="700" fill="#1a1a22" textLength="112" lengthAdjust="spacingAndGlyphs">WHERE YOU SHOULD</text><text x="0" y="103" font-size="19" font-weight="700" fill="#1a1a22" textLength="130" lengthAdjust="spacingAndGlyphs">TREAT YOUR TASTEBUDS</text>
<rect x="210" y="63" width="75" height="243" fill="url(#stripes)"/><rect x="209" y="63" width="1.5" height="243" fill="#111"/><rect x="284" y="63" width="1.5" height="243" fill="#111"/><rect x="210" y="63" width="75" height="1.5" fill="#111"/>
<rect x="271" y="288" width="13" height="15" fill="#c3cf83" stroke="#111"/><text x="272" y="300" font-size="10" font-weight="700" fill="#111">15</text>
<path d="M285 62L292 64L294 308L285 306Z" fill="#8fc6d8"/><path d="M292 64L300 68L301 310L292 308Z" fill="#e8dcd0"/><path d="M299 68L304 72L303 310L299 310Z" fill="#c79b94"/>
<path d="M210 88C195 85 165 90 160 125C160 140 170 150 185 150C195 150 205 148 210 146Z" fill="#f1e2c0"/><path d="M210 96C195 96 172 108 170 128C172 142 195 146 210 132Z" fill="#d6552a"/><circle cx="190" cy="116" r="7" fill="#f0c030"/><circle cx="200" cy="130" r="5" fill="#f3f3e0"/><circle cx="182" cy="130" r="4" fill="#b8402a"/>
<path d="M192 185L210 190V265L198 250L184 210Z" fill="#f3e5c8"/><path d="M172 245L182 208L198 252L186 272L174 276Z" fill="#f0e4c6"/><rect x="175" y="270" width="5" height="22" fill="#e5d3a8" transform="rotate(8 175 270)"/>
<g fill="#2c3a42" opacity=".7"><rect x="5" y="220" width="60" height="1"/><rect x="5" y="225" width="60" height="1"/><rect x="5" y="230" width="55" height="1"/><rect x="5" y="235" width="60" height="1"/><rect x="5" y="249" width="60" height="1"/><rect x="5" y="254" width="60" height="1"/><rect x="5" y="259" width="50" height="1"/><rect x="5" y="264" width="60" height="1"/><rect x="5" y="269" width="20" height="1"/><rect x="5" y="280" width="60" height="1"/><rect x="5" y="285" width="60" height="1"/><rect x="5" y="290" width="40" height="1"/>
<rect x="74" y="225" width="58" height="1"/><rect x="74" y="230" width="58" height="1"/><rect x="74" y="240" width="58" height="1"/><rect x="74" y="245" width="58" height="1"/><rect x="74" y="250" width="58" height="1"/><rect x="74" y="255" width="58" height="1"/><rect x="74" y="260" width="50" height="1"/><rect x="74" y="270" width="58" height="1"/><rect x="74" y="275" width="30" height="1"/></g>
</svg></div>

<!-- 11 girl -->
<div class="t" style="left:1023px;top:807px;width:355px;height:356px"><svg viewBox="0 0 355 356">
<rect width="355" height="356" fill="#000"/>
<ellipse cx="125" cy="150" rx="50" ry="80" fill="#777" filter="url(#b8)" opacity=".5"/>
<path d="M100 140C100 90 130 60 170 45C190 30 230 25 260 35C290 45 305 70 307 90L307 235H210L130 235C110 225 100 200 102 175Z" fill="#070707"/>
<path d="M135 13H163V108H145L135 80Z" fill="#3a3a3a"/><path d="M135 30L150 14L163 14V108L150 108L135 100Z" fill="#333"/>
<g stroke="#bbb" stroke-width="1.5" fill="none" stroke-dasharray="3 1"><path d="M150 40C162 60 165 85 162 108M155 45C165 70 155 90 150 105M145 60Q155 80 145 105"/></g>
<path d="M110 85Q125 65 135 55V100L108 108Z" fill="#343434"/>
<svg x="170" y="45" width="98" height="128" viewBox="170 45 98 128"><rect x="170" y="45" width="98" height="128" fill="#0c0c0c"/>
<g fill="none" stroke="#cfcfcf" stroke-width="2.6" stroke-dasharray="6 .8"><circle cx="248" cy="128" r="5" stroke-width="1.3"/><circle cx="248" cy="128" r="10" stroke-width="1.3"/><circle cx="248" cy="128" r="15" stroke-width="1.6"/><circle cx="246" cy="128" r="21"/><circle cx="244" cy="128" r="28"/><circle cx="242" cy="128" r="35"/><circle cx="240" cy="128" r="42"/><circle cx="238" cy="128" r="50"/><circle cx="236" cy="128" r="58"/><circle cx="234" cy="128" r="66"/><circle cx="232" cy="128" r="74"/><circle cx="230" cy="128" r="82"/></g></svg>
<path d="M163 40Q205 20 255 40L245 32Q205 22 170 32Z" fill="#8a8a8a"/>
<g stroke="#aaa" stroke-width="1" fill="none" opacity=".8"><path d="M278 75Q295 110 298 160M285 90Q300 120 296 200M272 70Q288 105 290 135M265 232Q285 180 283 170M275 234Q294 200 296 180M285 236Q304 210 305 190M295 236Q300 220 306 205"/><path d="M125 180Q125 210 145 232M115 175Q118 205 130 228M108 172Q112 195 122 222"/><path d="M128 105V135M136 105V135M145 112V133M155 110V133"/></g>
<path d="M127 175L170 163L238 173C232 200 218 222 207 233L186 248L182 253H172L140 213Z" fill="url(#gface)"/>
<path d="M200 175C215 190 232 175 238 173L230 190Z" fill="#333"/>
<ellipse cx="217" cy="170" rx="25" ry="10" fill="#111"/><path d="M205 166Q217 176 238 160Q228 172 217 172Q208 170 205 166Z" fill="#eee"/>
<circle cx="216" cy="150" r="19" fill="#cfcfcf"/><circle cx="216" cy="151" r="7" fill="#1a1a1a"/><circle cx="216" cy="151" r="10" fill="none" stroke="#555" stroke-width="2"/>
<rect x="93" y="136" width="44" height="39" fill="#888"/><ellipse cx="115" cy="155" rx="21" ry="13" fill="#111"/><ellipse cx="115" cy="154" rx="10" ry="6" fill="#999"/><circle cx="115" cy="154" r="4" fill="#111"/><circle cx="118" cy="152" r="1.8" fill="#fff"/>
<rect x="137" y="136" width="33" height="27" fill="#c9c9c9"/><ellipse cx="150" cy="155" rx="13" ry="7" fill="#fff"/><circle cx="150" cy="155" r="6" fill="#111"/><circle cx="153" cy="154" r="2" fill="#fff"/><path d="M137 143Q150 136 170 146" stroke="#555" stroke-width="2" fill="none"/>
<ellipse cx="172" cy="193" rx="10" ry="8" fill="#bbb" filter="url(#b4)"/><path d="M168 198Q172 200 180 197" stroke="#888" fill="none"/>
<path d="M160 218Q170 207 178 211Q186 207 198 218Q185 230 178 230Q170 230 160 218Z" fill="#3a3a3a"/><path d="M160 218Q178 222 198 218" stroke="#111" stroke-width="1.5" fill="none"/>
<ellipse cx="182" cy="248" rx="8" ry="5" fill="#fff" filter="url(#b1)"/>
<path d="M208 233L230 172L260 175L238 238Z" fill="#000"/>
<path d="M195 250C195 262 197 280 195 300L180 325L230 300L262 258L265 240L225 240Z" fill="url(#gneck)"/>
<path d="M233 262Q290 240 307 290V356H210L212 305Z" fill="#121212"/><path d="M233 262Q290 240 307 290V356H210L212 305Z" fill="url(#eyes)"/>
<path d="M137 356Q160 310 185 300L180 325L212 318L210 356Z" fill="#121212"/><path d="M137 356Q160 310 185 300L180 325L212 318L210 356Z" fill="url(#eyes)"/>
<rect x="225" y="279" width="30" height="26" fill="#bbb"/><path d="M232 288Q245 280 254 290Q245 298 232 288Z" fill="#222"/><rect x="207" y="279" width="18" height="26" fill="#222"/><g stroke="#ddd" stroke-width="1.5"><path d="M212 279V303M216 285V305M220 290V305"/></g>
<rect x="118" y="296" width="47" height="40" fill="#a0a0a0"/><ellipse cx="142" cy="318" rx="20" ry="12" fill="#e8e8e8"/><circle cx="142" cy="318" r="9.5" fill="#0c0c0c"/><circle cx="147" cy="316" r="3" fill="#eee"/><path d="M118 308Q140 296 165 312" stroke="#444" stroke-width="2" fill="none"/><rect x="108" y="305" width="4" height="32" fill="#ccc"/><rect x="108" y="296" width="4" height="9" fill="#222"/>
<g fill="#fff"><rect x="266" y="78" width="6" height="3.5"/><rect x="81" y="245" width="7.5" height="4"/><rect x="92" y="245" width="10" height="4"/><rect x="273" y="207" width="6" height="4.5"/><rect x="289" y="207" width="12" height="4.5"/><rect x="136" y="195" width="14" height="7"/></g><rect x="139" y="197" width="3.5" height="5" fill="#000"/><rect x="145" y="197" width="3.5" height="5" fill="#000"/>
<rect x="249" y="178" width="47" height="9" fill="#444"/><rect x="254" y="178" width="24" height="9" fill="#bbb"/><rect x="282" y="178" width="14" height="9" fill="#888"/>
<rect x="232" y="243" width="30" height="8" fill="#000"/><rect x="262" y="243" width="12" height="8" fill="#bbb"/><rect x="280" y="243" width="14" height="8" fill="#333"/>
<g stroke="#999" stroke-width="1"><path d="M68 138V175M71 140V174M74 138V175M77 142V172"/></g>
<g font-family="Noto Sans CJK JP,sans-serif" font-size="8.5" fill="#b5b5b5" style="writing-mode:vertical-rl;letter-spacing:2.5px"><text x="90" y="7">うずまき</text><text x="78" y="7">ジュンジの小さな遊び場</text><text x="64" y="7">ハッピーハロウィン</text></g>
<circle cx="59" cy="350" r="3.5" fill="none" stroke="#aaa"/>
</svg></div>

<!-- 12 mushrooms -->
<div class="t" style="left:1394px;top:807px;width:170px;height:170px"><svg viewBox="0 0 170 170">
<rect width="170" height="170" fill="#dda0e6"/><rect width="170" height="58" fill="#aee5a8"/>
<g filter="url(#r2)"><g fill="#e8f8e4" filter="url(#b1)"><ellipse cx="25" cy="12" rx="22" ry="7"/><ellipse cx="150" cy="25" rx="18" ry="9"/><ellipse cx="125" cy="12" rx="8" ry="6"/><ellipse cx="55" cy="22" rx="12" ry="5"/><ellipse cx="160" cy="50" rx="10" ry="10"/></g></g>
<rect y="58" width="170" height="2" fill="#e8c0ee"/>
<g stroke="#ecc6f0" stroke-width="1"><path d="M13 58V170M41 58V170M69 58V170M0 86H170M0 114H170M0 142H170"/></g>
<g fill="#f3f3f3" stroke="#333" stroke-width=".7"><circle cx="0" cy="72" r="9"/><circle cx="27" cy="72" r="9"/><circle cx="0" cy="99" r="9"/><circle cx="27" cy="99" r="9"/><circle cx="55" cy="99" r="9"/><circle cx="0" cy="128" r="9"/><circle cx="27" cy="128" r="9"/><circle cx="55" cy="128" r="9"/><circle cx="0" cy="156" r="9"/><circle cx="27" cy="156" r="9"/><circle cx="55" cy="156" r="9"/><circle cx="83" cy="156" r="9"/><circle cx="111" cy="156" r="9"/><circle cx="83" cy="128" r="9"/></g>
<g fill="#6a8a70"><circle cx="27" cy="71" r="3.5"/><circle cx="27" cy="97" r="3.5"/><circle cx="55" cy="125" r="3.5"/><circle cx="27" cy="126" r="3.5"/><circle cx="27" cy="154" r="3.5"/><circle cx="55" cy="154" r="3.5"/><circle cx="83" cy="154" r="3.5"/><circle cx="111" cy="154" r="3.5"/></g>
<path d="M0 30H64L78 43L60 57H0Z" fill="#2a1020"/><g fill="#8a3a60" filter="url(#b05)"><rect x="5" y="34" width="50" height="3"/><rect x="15" y="41" width="50" height="3"/><rect x="3" y="48" width="48" height="3"/></g>
<circle cx="107" cy="85" r="55" fill="#fff"/>
<path d="M107 31A55 55 0 0 0 52 85A55 55 0 0 0 98 139V70L60 60L88 42H107Z" fill="#a2e09c"/><rect x="98" y="130" width="26" height="8" fill="#6cc070"/><rect x="98" y="138" width="26" height="4" fill="#222"/>
<path d="M86 40L78 100M125 30L127 100M140 32L158 68" stroke="#999" stroke-width="1.5" fill="none" opacity=".6"/><path d="M100 38L80 100L62 103Z" fill="#6a9a70" opacity=".5"/>
<path d="M71 3L100 3L110 13L83 13Z" fill="#24101c"/><path d="M70 3L83 13V33L70 25Z" fill="#e0d0ff"/><path d="M83 13H110V23L83 33Z" fill="#dca0e8"/><rect x="111" y="0" width="28" height="13" fill="#dca0e8"/><rect x="100" y="0" width="11" height="4" fill="#e0d0ff"/>
<g stroke="#111" stroke-width="1.2"><path d="M64 77L62 100L78 102L74 76Z" fill="#b070c0"/><path d="M102 85L104 101L114 101L113 85Z" fill="#b070c0"/><path d="M140 78L135 102L153 104L150 78Z" fill="#b070c0"/>
<path d="M51 70C51 55 62 51 70 51C82 51 88 62 87 71C78 78 60 78 51 70Z" fill="#ef6aa8"/><path d="M89 86C89 75 98 70 106 70C115 70 124 75 124 85C115 90 98 90 89 86Z" fill="#ef6aa8"/><path d="M127 72C127 62 136 58 146 58C156 58 165 65 165 74C155 81 135 80 127 72Z" fill="#ef6aa8"/></g>
<g fill="#eee"><circle cx="65" cy="58" r="1"/><circle cx="75" cy="62" r="1"/><circle cx="60" cy="66" r="1"/><circle cx="104" cy="75" r="1"/><circle cx="114" cy="78" r="1"/><circle cx="142" cy="63" r="1"/><circle cx="152" cy="65" r="1"/></g>
<path d="M110 170L124 152L128 140L146 122L147 128L168 110L170 112V170Z" fill="#f077ae"/><g fill="#111"><path d="M122 170L132 150L146 142L140 160L158 146L170 135V170Z"/><path d="M138 160L155 155L150 165Z" fill="#f077ae"/><path d="M152 130L170 122V128L158 135Z"/></g>
</svg></div>

<!-- 13 lips -->
<div class="t" style="left:1394px;top:997px;width:170px;height:170px"><svg viewBox="0 0 170 170" font-family="Liberation Sans,sans-serif">
<rect width="170" height="170" fill="#02050a"/><rect x="0" y="3" width="167" height="163" fill="#070d16"/><rect x="52" y="8" width="11" height="160" fill="#03060b"/>
<g fill="#1a2c4c" filter="url(#r2)"><rect x="32" y="30" width="12" height="8"/><rect x="25" y="60" width="10" height="14"/><rect x="10" y="85" width="15" height="12"/><rect x="35" y="85" width="8" height="16"/><rect x="20" y="125" width="10" height="10"/><rect x="5" y="135" width="8" height="10"/><rect x="75" y="80" width="12" height="14"/><rect x="90" y="120" width="16" height="10"/><rect x="80" y="105" width="10" height="14"/><rect x="140" y="100" width="12" height="14"/><rect x="120" y="110" width="16" height="12"/><rect x="70" y="25" width="10" height="10"/><rect x="60" y="155" width="10" height="9"/></g>
<rect x="110" y="12" width="56" height="22" rx="6" fill="#5f5f63"/><rect x="140" y="30" width="26" height="12" fill="#777"/>
<rect x="0" y="136" width="34" height="24" rx="5" fill="url(#gg)" transform="scale(-1 1) translate(-34 0)"/><rect x="64" y="127" width="37" height="20" rx="4" fill="#4a4a4a"/>
<ellipse cx="116" cy="56" rx="52" ry="34" fill="#a01818" filter="url(#b4)"/>
<path d="M70 45C85 25 110 20 126 28C129 36 114 36 112 45L112 75C95 80 80 65 70 45Z" fill="#c11a22"/><path d="M118 48C125 36 150 45 165 66C150 88 125 90 116 80Z" fill="#c91c24"/>
<path d="M70 45C90 41 108 40 113 44L113 62C95 60 80 52 70 45Z" fill="#f3dbe0"/><path d="M122 58C140 60 155 64 163 66C150 72 130 72 122 68Z" fill="#f5e0e2"/>
<ellipse cx="111" cy="50" rx="6.5" ry="8" fill="#3a62b8"/><ellipse cx="124" cy="64" rx="6.5" ry="8" fill="#3a62b8"/><circle cx="111" cy="50" r="2.5" fill="#0a1a3a"/><circle cx="124" cy="64" r="2.5" fill="#0a1a3a"/>
<rect x="110.5" y="58" width="3.5" height="30" fill="#3a78c8"/><rect x="110" y="88" width="4" height="44" fill="#bcd8ef"/>
<circle cx="119" cy="102" r="8" fill="#8a2020" filter="url(#b1)"/><path d="M112 102L124 100L128 104L122 107Z" fill="#e8eef4"/>
<ellipse cx="111" cy="142" rx="13" ry="7" fill="none" stroke="#d5e2f2" stroke-width="2"/><rect x="108" y="130" width="7" height="5" fill="#9cc0e0"/>
<g font-size="8" fill="#b02a3a"><text x="115" y="128" textLength="48" lengthAdjust="spacingAndGlyphs">The House of</text><text x="115" y="136" textLength="48" lengthAdjust="spacingAndGlyphs">Dr Edwardes</text></g><text x="117" y="142" font-size="3.6" font-weight="700" fill="#e03040">FRANCIS BEEDING</text>
<g fill="#b01822"><rect x="0" y="28" width="15" height="1.5"/><rect x="0" y="32" width="11" height="1.5"/><rect x="0" y="38" width="26" height="1"/><rect x="0" y="42" width="26" height="1"/><rect x="0" y="46" width="22" height="1"/><rect x="0" y="50" width="26" height="1"/><rect x="0" y="58" width="26" height="1"/><rect x="0" y="62" width="26" height="1"/><rect x="0" y="66" width="20" height="1"/><rect x="0" y="70" width="26" height="1"/><rect x="0" y="74" width="18" height="1"/><rect x="56.5" y="120" width="1.2" height="30"/></g><rect x="16" y="150" width="30" height="6" fill="#c03040" opacity=".6"/>
<path d="M74 20L74 35M70 27H78M88 32L88 44M84 38H92M156 150V165M152 158H160" stroke="#aaa" stroke-width=".8"/>
</svg></div>

<!-- 14 green -->
<div class="t" style="left:94px;top:997px;width:170px;height:170px"><svg viewBox="0 0 170 170" font-family="Liberation Mono,monospace">
<rect width="170" height="170" fill="#000"/><rect y="15" width="170" height="140" fill="#24f024"/>
<rect x="4" y="19" width="100" height="132" fill="#2ae62a" stroke="#109010"/><rect x="4" y="19" width="100" height="8" fill="#0b3f0b"/><rect x="6" y="27" width="26" height="3" fill="#b8f8b8"/><rect x="42" y="27" width="26" height="3" fill="#b8f8b8"/>
<path d="M4 84C14 128 60 148 104 150V155H4Z" fill="#1fc81f"/><path d="M4 84C14 128 60 148 104 150" fill="none" stroke="#063806" stroke-width="1.4"/>
<g stroke="#0e7e0e" stroke-width=".6"><path d="M15 115L15 155M25 125L25 155M35 130L35 155M45 137L45 155M55 140L55 155M65 143L65 155M75 145L75 155M85 147L85 155M5 130H40M5 140H50M5 148H95"/></g>
<g stroke="#0f8a0f" stroke-width=".7"><path d="M78 33L104 65M84 33L104 55M90 33L104 45M72 33L104 72"/></g>
<rect x="12" y="31" width="65" height="44" fill="#36ea36" stroke="#0a5a0a" stroke-width=".8"/>
<text x="14" y="46" font-size="17" fill="#063c06" textLength="59" lengthAdjust="spacingAndGlyphs">Ricardo</text><text x="14" y="65" font-size="17" fill="#063c06" textLength="75" lengthAdjust="spacingAndGlyphs">Dominguez</text>
<g fill="#14ae14" font-size="17"><text x="14" y="83" textLength="50" lengthAdjust="spacingAndGlyphs">4-7-22</text><text x="14" y="101" textLength="32" lengthAdjust="spacingAndGlyphs">Zoom</text><text x="14" y="118" textLength="27" lengthAdjust="spacingAndGlyphs">6pm</text></g>
<path d="M45 72L48 83L52 82L60 74Z" fill="#0a3a0a"/><rect x="12" y="70" width="30" height="5" fill="#0a5a0a"/><rect x="6" y="55" width="5" height="9" fill="#0d5a0d"/>
<rect x="110" y="19" width="47" height="80" fill="#2ae62a" stroke="#109010"/><rect x="110" y="19" width="47" height="7" fill="#0b3f0b"/><rect x="111" y="30" width="46" height="51" rx="3" fill="#44d644" stroke="#129012"/>
<g fill="none" stroke="#0c6a0c" stroke-width="1.2" stroke-dasharray="1 1"><path d="M122 42Q134 32 144 42L146 58Q140 75 130 68L124 60Z"/><path d="M128 52H140M132 62Q136 60 140 64"/></g>
<rect x="161" y="40" width="9" height="3" fill="#062"/><rect x="164" y="72" width="6" height="8" fill="#083008"/><rect x="166" y="95" width="4" height="8" fill="#083008"/>
<rect x="66" y="88" width="92" height="61" fill="#45e645" stroke="#109010"/><rect x="66" y="88" width="92" height="4" fill="#0b3f0b"/>
<g fill="#117011"><rect x="69" y="96" width="20" height="1.2"/><rect x="69" y="99" width="20" height="1.2"/><rect x="69" y="102" width="20" height="1.2"/><rect x="69" y="105" width="20" height="1.2"/><rect x="69" y="108" width="20" height="1.2"/><rect x="69" y="111" width="20" height="1.2"/><rect x="69" y="114" width="20" height="1.2"/><rect x="69" y="117" width="20" height="1.2"/><rect x="69" y="120" width="20" height="1.2"/><rect x="69" y="123" width="20" height="1.2"/><rect x="69" y="126" width="20" height="1.2"/><rect x="69" y="129" width="20" height="1.2"/></g>
<g fill="#063c06" font-size="22"><text x="94" y="110" textLength="50" lengthAdjust="spacingAndGlyphs">ART IS</text><text x="112" y="125" textLength="34" lengthAdjust="spacingAndGlyphs">NOT A</text><text x="117" y="147" font-size="26" textLength="75" lengthAdjust="spacingAndGlyphs">CRIME</text></g>
<circle cx="100" cy="120" r="7" fill="none" stroke="#063c06"/><circle cx="97.5" cy="118" r="1" fill="#063c06"/><circle cx="102.5" cy="118" r="1" fill="#063c06"/><path d="M96 122Q100 126 104 122" fill="none" stroke="#063c06"/>
</svg></div>

<!-- 15 five years -->
<div class="t" style="left:280px;top:997px;width:355px;height:240px"><svg viewBox="0 0 355 240" font-family="Liberation Serif,serif">
<rect width="355" height="240" fill="#fff"/>
<svg x="62" y="5.5" width="243" height="235" viewBox="62 5.5 243 235">
<rect x="62" y="5" width="243" height="236" fill="#4f79b5"/><rect x="62" y="60" width="85" height="60" fill="#4470ae"/><rect x="62" y="120" width="85" height="120" fill="#7ba3d6"/><rect x="203" y="5" width="102" height="120" fill="#5682c0"/>
<g filter="url(#b2)" fill="#dce9f5"><ellipse cx="140" cy="150" rx="9" ry="24"/><ellipse cx="83" cy="131" rx="5" ry="4"/><ellipse cx="130" cy="175" rx="6" ry="12"/></g>
<ellipse cx="110" cy="90" rx="30" ry="14" fill="#3a5e9a" filter="url(#b2)"/>
<path d="M62 5H110C112 20 108 38 90 45C80 48 70 48 62 44Z" fill="#d8a569"/><g fill="#c08e58" filter="url(#b1)"><circle cx="80" cy="20" r="6"/><circle cx="95" cy="30" r="5"/></g>
<rect x="147" y="5" width="6" height="235" fill="#2d4a8a"/><rect x="153" y="5" width="50" height="235" fill="#151428"/>
<ellipse cx="170" cy="25" rx="14" ry="15" fill="#45406a" filter="url(#b4)"/><ellipse cx="185" cy="100" rx="14" ry="30" fill="#242a4a" filter="url(#b4)"/>
<g fill="#fff"><circle cx="160" cy="15" r=".7"/><circle cx="180" cy="12" r=".7"/><circle cx="195" cy="25" r=".7"/><circle cx="160" cy="60" r=".7"/><circle cx="180" cy="70" r=".7"/><circle cx="165" cy="95" r=".7"/><circle cx="190" cy="90" r=".7"/><circle cx="198" cy="115" r=".7"/><circle cx="158" cy="140" r=".7"/><circle cx="175" cy="150" r=".7"/><circle cx="194" cy="140" r=".7"/></g>
<path d="M153 34Q165 30 176 36Q176 46 153 52Z" fill="#e8dfc6" stroke="#d49a4e" stroke-width="1.5"/>
<path d="M176 160C188 158 196 158 203 158V185C190 200 180 220 170 240L162 235C158 220 155 205 162 190C165 175 170 165 176 160Z" fill="#d8d0b0" stroke="#d89248" stroke-width="2.5"/>
<path d="M185 180L187 200L178 215" stroke="#444" fill="none"/><path d="M155 188L172 185L170 195L158 198Z" fill="#eee"/><circle cx="161" cy="190" r="2" fill="#b03050"/>
<g filter="url(#r2)"><path d="M62 125C75 145 90 158 105 172C122 190 137 215 142 240H62Z" fill="#3a7a2a"/><path d="M305 30C285 35 265 60 245 80L222 112C215 125 218 140 207 165L203 190L203 240H305Z" fill="#2d6626"/></g>
<g fill="#1f5618" filter="url(#b2)"><ellipse cx="90" cy="205" rx="16" ry="18"/><ellipse cx="120" cy="225" rx="12" ry="10"/><ellipse cx="75" cy="165" rx="8" ry="12"/></g><g fill="#5a9a3a" filter="url(#b2)"><ellipse cx="75" cy="195" rx="8" ry="12"/><ellipse cx="105" cy="195" rx="7" ry="10"/></g>
<g fill="#17431a" filter="url(#b4)"><ellipse cx="270" cy="190" rx="25" ry="22"/><ellipse cx="225" cy="225" rx="15" ry="15"/><ellipse cx="290" cy="95" rx="10" ry="30"/></g><g fill="#4b8a36" filter="url(#b2)"><ellipse cx="245" cy="145" rx="14" ry="12"/><ellipse cx="285" cy="230" rx="14" ry="10"/></g>
<path d="M63 70Q66 62 80 58L118 45L134 28L139 34Q132 58 110 62L80 72Z" fill="#b2c2dc"/><path d="M70 55Q80 52 85 62L63 68Z" fill="#93a5c2"/><rect x="122" y="20" width="13" height="70" rx="2" fill="#8e9dae"/><path d="M88 48Q110 42 130 34L136 38Q120 55 100 58Z" fill="#c2d0e2"/>
<g fill="#e0853a"><path d="M171 35l-3 8 3 3 3-3z"/><path d="M86 94l-3 6 3 3 3-3z"/><path d="M86 145l-3 8 3 4 3-4z"/><path d="M264 25l-3 10 3 4 3-4z"/><path d="M289 155l-3 10 3 4 3-4z"/><path d="M219 193l-3 10 3 4 3-4z"/><path d="M119 213l-3 10 3 4 3-4z"/></g>
<path d="M228 126L247 127L248 153L231 150Z" fill="#ece3d0"/><path d="M236 134q2-2 3 0q2-2 3 0q0 3-3 7q-3-4-3-7z" fill="#a82035"/>
<text x="193" y="61" font-size="33" font-weight="700" fill="#fff" textLength="99" lengthAdjust="spacingAndGlyphs">WHEN</text><text x="117" y="93" font-size="33" font-weight="700" fill="#fff" textLength="175" lengthAdjust="spacingAndGlyphs">FIVE YEARS</text><text x="220" y="125" font-size="33" font-weight="700" fill="#fff" textLength="72" lengthAdjust="spacingAndGlyphs">PASS</text>
<path d="M198 88L212 96" stroke="#7bb6b0" stroke-width="2"/>
<g fill="#e5ecf4" font-style="italic" font-size="6" font-weight="700"><text x="89" y="109" textLength="65" lengthAdjust="spacingAndGlyphs">by Federico García Lorca</text><text x="107" y="117" textLength="83" lengthAdjust="spacingAndGlyphs">Translated by Gwynne Edwards</text><text x="137" y="126" textLength="60" lengthAdjust="spacingAndGlyphs">Directed by Kaitsun Ong</text></g>
<text x="257" y="22" font-size="8" fill="#e0e8f0" font-family="Liberation Sans" textLength="37" lengthAdjust="spacingAndGlyphs">CALARTS</text><text x="257" y="25" font-size="2.6" fill="#e0e8f0" font-family="Liberation Sans" textLength="37" lengthAdjust="spacingAndGlyphs">SCHOOL OF THEATER</text>
</svg></svg></div>

<!-- 16 ions -->
<div class="t" style="left:94px;top:1187px;width:170px;height:50px"><svg viewBox="0 0 170 50" font-family="Liberation Mono,monospace">
<rect width="60" height="50" fill="#2a3170"/><rect x="60" width="110" height="50" fill="#fcc32d"/><rect width="1" height="16" fill="#fcc32d"/>
<rect x="72" y="8" width="95" height="38" rx="3" fill="#222"/><rect x="71" y="6" width="95" height="38" rx="3" fill="#fff"/>
<g font-family="Liberation Sans" font-size="3.6" fill="#333"><text x="79" y="15" textLength="73" lengthAdjust="spacingAndGlyphs">We have narrowed down what Graphic</text><text x="79" y="20" textLength="73" lengthAdjust="spacingAndGlyphs">Design means to you and what about</text><text x="79" y="25" textLength="73" lengthAdjust="spacingAndGlyphs">that interpretation is of particular inter-</text><text x="79" y="30" textLength="78" lengthAdjust="spacingAndGlyphs">est to you, now comes the first question</text><text x="79" y="35" textLength="70" lengthAdjust="spacingAndGlyphs">of what do you want to say about it?</text></g>
<text x="0" y="48" font-size="20" font-weight="700" fill="#fff" textLength="48" lengthAdjust="spacingAndGlyphs">IONS</text>
</svg></div>

<div class="t" style="left:651px;top:1187px;width:356px;height:50px;background:#fff"></div>

<!-- 18 baby hotline -->
<div class="t" style="left:1023px;top:1187px;width:170px;height:50px"><svg viewBox="0 0 170 50" font-family="Liberation Serif,serif">
<rect width="170" height="50" fill="#fff"/><rect x="9" y="18" width="134" height="32" fill="#e4ad94"/><path d="M143 23Q160 20 170 28V50H143Z" fill="#6d5f9c"/>
<path d="M20 32Q45 18 75 25Q95 28 103 38Q115 45 143 42" fill="none" stroke="#c412b0" stroke-width="7" stroke-dasharray="2.5 1.5"/><path d="M12 45L22 33" fill="none" stroke="#c412b0" stroke-width="7"/>
<path d="M30 26Q50 32 70 26" fill="none" stroke="#4a50c0"/>
<text x="27" y="48" font-size="8.5" font-weight="700" fill="#e9e34a" textLength="62" lengthAdjust="spacingAndGlyphs">Baby Hotline</text>
</svg></div>

<!-- 19 record -->
<div class="t" style="left:1209px;top:1187px;width:169px;height:50px"><svg viewBox="0 0 169 50">
<rect width="169" height="50" fill="#19191b"/><g fill="#262628" filter="url(#b4)"><ellipse cx="40" cy="15" rx="30" ry="6"/><ellipse cx="130" cy="20" rx="25" ry="8"/></g>
<circle cx="82" cy="82" r="52" fill="#7ea9dc"/><path d="M60 50Q70 40 80 42" fill="none" stroke="#b4cbe6" stroke-width="3"/>
</svg></div>

<!-- 20 angel -->
<div class="t" style="left:1394px;top:1187px;width:170px;height:50px"><svg viewBox="0 0 170 50">
<rect width="170" height="50" fill="#fff"/><path d="M22 2L150 5L148 50H22Z" fill="#000"/>
<path d="M40 50L50 35L50 20Q46 10 52 6Q58 8 60 12Q68 2 74 8Q72 18 78 22Q90 26 90 38Q95 40 105 36L108 50Z" fill="#fff"/><path d="M105 50Q112 35 125 36Q130 22 138 24Q142 32 140 42L143 50Z" fill="#fff"/>
<ellipse cx="122" cy="16" rx="12" ry="5" transform="rotate(-25 122 16)" fill="none" stroke="#fff" stroke-width="1.6"/>
<circle cx="55" cy="42" r="3" fill="#000"/><rect x="62" y="22" width="3" height="10" fill="#000"/><rect x="68" y="22" width="3" height="10" fill="#000"/>
</svg></div>

<svg id="ov" viewBox="0 0 1659 1237" font-family="Liberation Sans,sans-serif">
<g fill="#fff" font-family="Liberation Mono,monospace" font-size="32">
<text x="119" y="84" textLength="339" lengthAdjust="spacingAndGlyphs">CalArts_Graphic-Design</text>
<text x="119" y="130" textLength="187" lengthAdjust="spacingAndGlyphs">_2022_Final_</text>
<text x="306" y="130" font-weight="700" textLength="165" lengthAdjust="spacingAndGlyphs">Final_Final</text></g>
<text x="119" y="168" fill="#fff" font-family="Liberation Serif,serif" font-weight="700" font-size="20.5" textLength="148" lengthAdjust="spacingAndGlyphs">End of Year Show</text>
<g font-size="16" fill="#fff" stroke="#fff" stroke-width=".25">
<text x="1158.7" y="54" textLength="38.7" lengthAdjust="spacingAndGlyphs">HOME</text>
<text x="1224" y="54" textLength="39" lengthAdjust="spacingAndGlyphs" fill="#2d2e30" stroke="#2d2e30">WORK</text>
<text x="1289.5" y="54" textLength="77.3" lengthAdjust="spacingAndGlyphs">DESIGNERS</text>
<text x="1393.3" y="54" textLength="101.7" lengthAdjust="spacingAndGlyphs">GALLERY SHOW</text>
<text x="1522" y="54" textLength="45.5" lengthAdjust="spacingAndGlyphs">ABOUT</text></g>
<g font-size="17.7" fill="#1ff5ef" stroke="#1ff5ef" stroke-width=".2">
<text x="634.7" y="298" textLength="148.8" lengthAdjust="spacingAndGlyphs">FILTER BY MEDIUM</text>
<text x="846" y="298" textLength="177.3" lengthAdjust="spacingAndGlyphs">FILTER BY YEAR LEVEL</text></g>
<rect x="0" y="1236" width="650" height="1" fill="#8a8a8a"/><rect x="650" y="1236" width="1009" height="1" fill="#1c1c1c"/>
<path d="M0 1229V1237H8Q0 1237 0 1229Z" fill="#aaa"/>
</svg>
</div></body></html>
